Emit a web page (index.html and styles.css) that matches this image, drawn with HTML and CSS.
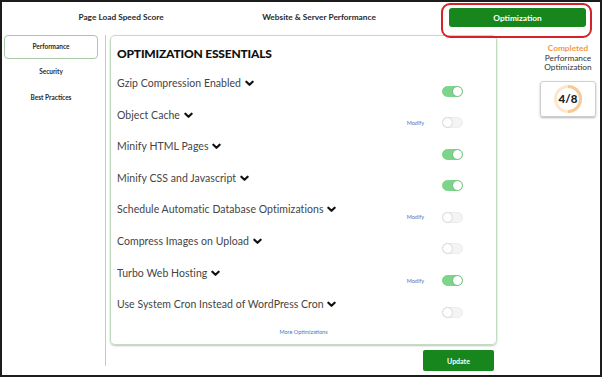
FILE: index.html
```html
<!DOCTYPE html>
<html>
<head>
<meta charset="utf-8">
<link rel="stylesheet" href="styles.css">
</head>
<body>
<div class="frame">
  <nav class="topnav">
    <div class="tab tab-speed">Page Load Speed Score</div>
    <div class="tab tab-server">Website &amp; Server Performance</div>
    <div class="highlight">
      <button class="tab-btn">Optimization</button>
    </div>
  </nav>
  <div class="main">
    <aside class="sidebar">
      <div class="side-item active">Performance</div>
      <div class="side-item">Security</div>
      <div class="side-item">Best Practices</div>
    </aside>
    <div class="divider"></div>
    <section class="content">
      <div class="card">
        <h2 class="card-title">OPTIMIZATION ESSENTIALS</h2>
        <div class="row">
          <div class="label">Gzip Compression Enabled <svg class="chev" viewBox="0 0 10 7"><path d="M1.5 1.5 L5 5 L8.5 1.5"/></svg></div>
          <div class="controls"><span class="toggle on"></span></div>
        </div>
        <div class="row">
          <div class="label">Object Cache <svg class="chev" viewBox="0 0 10 7"><path d="M1.5 1.5 L5 5 L8.5 1.5"/></svg></div>
          <div class="controls"><a class="modify">Modify</a><span class="toggle"></span></div>
        </div>
        <div class="row">
          <div class="label">Minify HTML Pages <svg class="chev" viewBox="0 0 10 7"><path d="M1.5 1.5 L5 5 L8.5 1.5"/></svg></div>
          <div class="controls"><span class="toggle on"></span></div>
        </div>
        <div class="row">
          <div class="label">Minify CSS and Javascript <svg class="chev" viewBox="0 0 10 7"><path d="M1.5 1.5 L5 5 L8.5 1.5"/></svg></div>
          <div class="controls"><span class="toggle on"></span></div>
        </div>
        <div class="row">
          <div class="label">Schedule Automatic Database Optimizations <svg class="chev" viewBox="0 0 10 7"><path d="M1.5 1.5 L5 5 L8.5 1.5"/></svg></div>
          <div class="controls"><a class="modify">Modify</a><span class="toggle"></span></div>
        </div>
        <div class="row">
          <div class="label">Compress Images on Upload <svg class="chev" viewBox="0 0 10 7"><path d="M1.5 1.5 L5 5 L8.5 1.5"/></svg></div>
          <div class="controls"><span class="toggle"></span></div>
        </div>
        <div class="row">
          <div class="label">Turbo Web Hosting <svg class="chev" viewBox="0 0 10 7"><path d="M1.5 1.5 L5 5 L8.5 1.5"/></svg></div>
          <div class="controls"><a class="modify">Modify</a><span class="toggle on"></span></div>
        </div>
        <div class="row">
          <div class="label">Use System Cron Instead of WordPress Cron <svg class="chev" viewBox="0 0 10 7"><path d="M1.5 1.5 L5 5 L8.5 1.5"/></svg></div>
          <div class="controls"><span class="toggle"></span></div>
        </div>
        <a class="more">More Optimizations</a>
      </div>
      <div class="actions">
        <button class="update">Update</button>
      </div>
    </section>
    <aside class="status">
      <div class="completed">Completed</div>
      <div class="status-text">Performance<br>Optimization</div>
      <div class="score-box">
        <div class="ring">
          <svg viewBox="0 0 30 30" width="30" height="30">
            <circle cx="15" cy="15" r="12.5" fill="none" stroke="#fde6cf" stroke-width="3"/>
            <path d="M15 2.5 A12.5 12.5 0 0 1 15 27.5" fill="none" stroke="#f9c996" stroke-width="3"/>
          </svg>
          <span class="score">4/8</span>
        </div>
      </div>
    </aside>
  </div>
</div>
</body>
</html>
```
FILE: styles.css
```css
* { box-sizing: border-box; }
html, body { margin: 0; padding: 0; background: #fff; }
body { font-family: Lato, "Open Sans", sans-serif; color: #222; }

.frame {
  width: 602px;
  height: 377px;
  border: 2px solid #1c1c1c;
  overflow: hidden;
}

.topnav {
  display: flex;
  align-items: flex-start;
  height: 33px;
}
.tab {
  font-size: 8.3px;
  font-weight: 700;
  color: #2a2a2a;
  text-align: center;
  padding-top: 10px;
  line-height: 10px;
}
.tab-speed { width: 238px; }
.tab-server { width: 158px; }
.highlight {
  margin-left: 43px;
  margin-top: 1px;
  width: 151px;
  height: 35px;
  border: 2px solid #d42229;
  border-radius: 9px;
  padding: 3px 0 0 6px;
  position: relative;
  z-index: 1;
}
.tab-btn {
  display: block;
  width: 137px;
  height: 19px;
  border: none;
  border-radius: 3px;
  background: #17861c;
  color: #fff;
  font-family: Lato, sans-serif;
  font-size: 8.3px;
  font-weight: 700;
  padding: 0;
}

.main {
  display: flex;
  align-items: flex-start;
}

.sidebar {
  width: 94px;
  margin-left: 2px;
  display: flex;
  flex-direction: column;
}
.side-item {
  font-size: 6.5px;
  font-weight: 700;
  color: #2a2a2a;
  text-align: center;
  height: 26px;
  line-height: 24px;
}
.side-item.active {
  height: 24px;
  border: 1px solid #a9c9a9;
  border-radius: 4px;
  line-height: 22px;
  margin-bottom: 1px;
}

.divider {
  width: 1px;
  height: 331px;
  background: #c8c8c8;
  margin-left: 7px;
}

.content {
  margin-left: 4px;
  width: 387px;
}
.card {
  height: 310px;
  border: 1px solid #c2dcc2;
  border-radius: 5px;
  box-shadow: 0 1px 2px rgba(0,0,0,0.25);
  padding: 10px 33px 0 6px;
}
.card-title {
  margin: 0 0 13px 0;
  font-family: Lato, sans-serif;
  font-weight: 900;
  font-size: 12px;
  line-height: 16px;
  color: #111;
  letter-spacing: -0.2px;
}
.row {
  display: flex;
  justify-content: space-between;
  height: 31.6px;
}
.label {
  font-size: 10.5px;
  line-height: 16px;
  color: #444;
  white-space: nowrap;
  letter-spacing: 0.05px;
}
.chev {
  width: 9px;
  height: 7px;
  margin-left: 1px;
  vertical-align: 0;
}
.chev path {
  fill: none;
  stroke: #111;
  stroke-width: 2.4;
  stroke-linecap: round;
  stroke-linejoin: round;
}
.controls {
  display: flex;
  align-items: center;
  margin-top: 10px;
  height: 12px;
}
.modify {
  font-size: 5.5px;
  color: #4a78c0;
  margin-right: 18px;
}
.toggle {
  position: relative;
  display: inline-block;
  width: 21px;
  height: 11px;
  border-radius: 6px;
  background: #f4f4f4;
  border: 1px solid #ececec;
}
.toggle::after {
  content: "";
  position: absolute;
  top: 0;
  left: 0;
  width: 9px;
  height: 9px;
  border-radius: 50%;
  background: #fff;
  box-shadow: 0 0 1.5px rgba(0,0,0,0.35);
}
.toggle.on {
  background: #7ed48a;
  border-color: #7ed48a;
}
.toggle.on::after {
  left: 10px;
}
.more {
  display: block;
  text-align: center;
  font-size: 5.5px;
  color: #4a78c0;
  margin-top: 1px;
  margin-right: -27px;
}

.actions {
  display: flex;
  justify-content: flex-end;
  padding-right: 3px;
  margin-top: 5px;
}
.update {
  width: 71px;
  height: 21px;
  border: none;
  border-radius: 2px;
  background: #17861c;
  color: #fff;
  font-family: Lato, sans-serif;
  font-size: 7px;
  font-weight: 700;
}

.status {
  margin-left: 42px;
  width: 58px;
  text-align: center;
  padding-top: 9px;
}
.completed {
  font-size: 8.3px;
  font-weight: 700;
  color: #f59a45;
  line-height: 9.5px;
}
.status-text {
  font-size: 8.3px;
  color: #333;
  line-height: 9.5px;
}
.score-box {
  margin-top: 8px;
  margin-left: 1px;
  width: 56px;
  height: 36px;
  border: 1px solid #cfcfcf;
  border-radius: 3px;
  box-shadow: 0 1px 2px rgba(0,0,0,0.3);
  display: flex;
  align-items: center;
  justify-content: center;
}
.ring {
  position: relative;
  width: 30px;
  height: 30px;
}
.ring svg { display: block; }
.score {
  position: absolute;
  inset: 0;
  display: flex;
  align-items: center;
  justify-content: center;
  font-size: 11.5px;
  font-weight: 900;
  color: #222;
}
```
